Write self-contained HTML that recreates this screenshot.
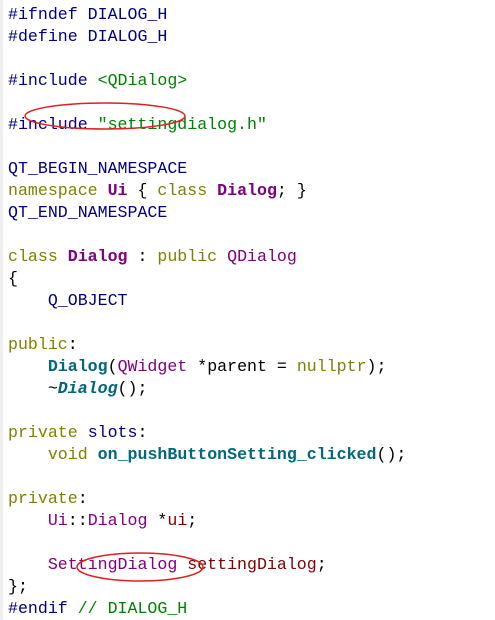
<!DOCTYPE html>
<html><head><meta charset="utf-8"><style>
body{margin:0;width:495px;height:620px;background:#fff;position:relative;overflow:hidden}
.g{position:absolute;left:0;top:0;width:3px;height:620px;background:#eeeeee}
pre{margin:0;position:absolute;left:8px;top:3.5px;font-family:"Liberation Mono",monospace;font-size:16.6px;line-height:22px;color:#000}
.n{color:#000080}.s{color:#008000}.k{color:#808000}.p{color:#800080}.pb{color:#800080;font-weight:bold}
.f{color:#00677c;font-weight:bold}.fi{color:#00677c;font-weight:bold;font-style:italic}.m{color:#800000}
svg{position:absolute;left:0;top:0}
</style></head><body><div class="g"></div>
<pre><span class="n">#ifndef DIALOG_H</span>
<span class="n">#define DIALOG_H</span>

<span class="n">#include </span><span class="s">&lt;QDialog&gt;</span>

<span class="n">#include </span><span class="s">"settingdialog.h"</span>

<span class="n">QT_BEGIN_NAMESPACE</span>
<span class="k">namespace</span> <span class="pb">Ui</span> { <span class="k">class</span> <span class="pb">Dialog</span>; }
<span class="n">QT_END_NAMESPACE</span>

<span class="k">class</span> <span class="pb">Dialog</span> : <span class="k">public</span> <span class="p">QDialog</span>
{
    <span class="n">Q_OBJECT</span>

<span class="k">public</span>:
    <span class="f">Dialog</span>(<span class="p">QWidget</span> *parent = <span class="k">nullptr</span>);
    ~<span class="fi">Dialog</span>();

<span class="k">private</span> <span class="n">slots</span>:
    <span class="k">void</span> <span class="f">on_pushButtonSetting_clicked</span>();

<span class="k">private</span>:
    <span class="p">Ui</span>::<span class="p">Dialog</span> *<span class="m">ui</span>;

    <span class="p">SettingDialog</span> <span class="m">settingDialog</span>;
};
<span class="n">#endif</span> <span class="s">// DIALOG_H</span></pre>
<svg width="495" height="620"><ellipse cx="105" cy="116" rx="80" ry="13" fill="none" stroke="#e02020" stroke-width="1.5"/><ellipse cx="140" cy="567" rx="63" ry="14" fill="none" stroke="#e02020" stroke-width="1.5"/></svg>
</body></html>
